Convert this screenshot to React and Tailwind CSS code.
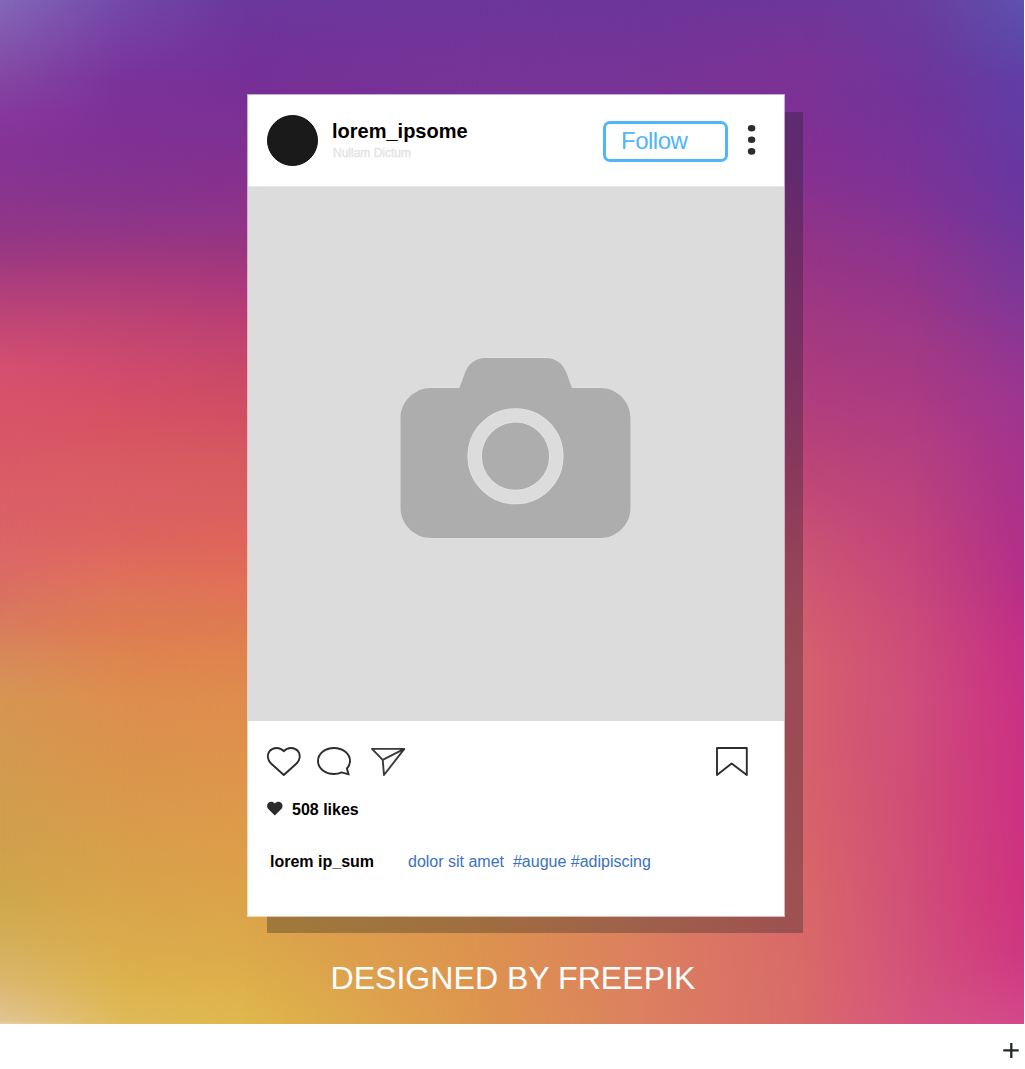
import React from "react";

/* Vertical colour ramps; each one fades in over the previous from left to right. */
const backdropRamps = [
  "bg-[linear-gradient(180deg,#8468b8_0px,#8356ad_45px,#8447a2_80px,#863a9f_110px,#863497_140px,#873494_170px,#8b358b_200px,#913787_230px,#9e3a80_260px,#ab3e7f_280px,#b5417a_300px,#c54874_330px,#d44f72_365px,#d85269_400px,#d95867_450px,#db5e67_500px,#dc6866_560px,#d97361_600px,#d87d5d_630px,#d78b59_660px,#d69653_700px,#d39a50_750px,#d29d4e_800px,#cfa14c_850px,#d0a84c_900px,#d4ae58_940px,#dab76c_980px,#debd7f_1000px,#e2c795_1024px)]",
  "bg-[linear-gradient(180deg,#7249a9_0px,#783ea2_40px,#7a339b_80px,#7d3196_120px,#823292_160px,#87348c_200px,#913688_230px,#a2387e_260px,#b03e7a_290px,#bd4474_320px,#c94870_350px,#d24c6b_380px,#d65263_420px,#d95a62_460px,#da5f63_500px,#dd645f_540px,#df6e5b_570px,#de7757_600px,#de7c52_630px,#de854f_660px,#dd8e4f_700px,#db924c_740px,#d9994c_800px,#d89f4a_850px,#d9a54b_900px,#daab4c_940px,#dcb24d_980px,#e0ba5a_1024px)] [mask-image:linear-gradient(90deg,transparent_0px,black_120px)]",
  "bg-[linear-gradient(180deg,#6b379d_0px,#70339a_40px,#772f96_90px,#7d3194_130px,#87308e_180px,#8f3489_220px,#9a367f_250px,#ad3a7c_290px,#ba3f73_320px,#c3456e_350px,#cb4a66_380px,#d25063_420px,#d65a60_460px,#d95f60_500px,#df6459_540px,#e06f58_580px,#de7a51_620px,#df824f_650px,#df8c4d_700px,#de924c_750px,#de974b_800px,#dd9d49_850px,#dca34a_900px,#dca94a_950px,#dfb84c_1024px)] [mask-image:linear-gradient(90deg,transparent_120px,black_245px)]",
  "bg-[linear-gradient(180deg,#6c369b_0px,#793395_94px,#dd914f_900px,#dd954e_1024px)] [mask-image:linear-gradient(90deg,transparent_245px,black_480px)]",
  "bg-[linear-gradient(180deg,#6c3599_0px,#793395_94px,#dc7e5f_900px,#dc8160_1024px)] [mask-image:linear-gradient(90deg,transparent_480px,black_640px)]",
  "bg-[linear-gradient(180deg,#6d3699_0px,#7a3295_60px,#7e3194_120px,#863191_180px,#923487_240px,#9f3783_300px,#a53a80_340px,#b03e7d_400px,#b94378_450px,#c34a76_500px,#ca5373_550px,#d05a70_600px,#d5606d_660px,#d6606d_750px,#d76569_850px,#d86868_900px,#d96a6a_1024px)] [mask-image:linear-gradient(90deg,transparent_640px,black_805px)]",
  "bg-[linear-gradient(180deg,#6a3d9e_0px,#6e379c_60px,#713399_100px,#783399_150px,#803395_200px,#8c3490_250px,#97368a_300px,#a23985_350px,#ab3b83_400px,#b53f80_450px,#bb427d_500px,#c4457c_560px,#cb4a7a_620px,#cf4d7b_700px,#d04c78_800px,#d14e78_900px,#d3527b_980px,#d65482_1024px)] [mask-image:linear-gradient(90deg,transparent_805px,black_915px)]",
  "bg-[linear-gradient(180deg,#5f50ae_0px,#5d48a8_40px,#613ea5_80px,#633ba3_120px,#6736a0_170px,#6c369e_210px,#753799_250px,#7f3797_300px,#903692_350px,#9d3590_400px,#a5338c_450px,#ac318a_500px,#b13088_550px,#bb2f86_600px,#c53085_650px,#ca3184_700px,#cd3182_800px,#cf337f_900px,#cf3781_950px,#d03e84_980px,#d3498a_1024px)] [mask-image:linear-gradient(90deg,transparent_915px,black_1020px)]",
];

function Backdrop() {
  return (
    <>
      {backdropRamps.map((ramp) => (
        <div key={ramp} className={`col-start-1 row-start-1 ${ramp}`} />
      ))}
      <div className="col-start-1 row-start-1 border-r-2 border-b-2 border-white/15" />
    </>
  );
}

function CameraIcon() {
  return (
    <svg width="232" height="182" viewBox="400 357 232 182">
      <path
        d="M431 388H459.3L464.5 374C468 364 475 358 485.500 358H546C556 358 563.500 364 567 374L572 388H600.500C617 388 630.500 401.500 630.500 418V508C630.500 524.500 617 538 600.500 538H431C414.500 538 400.500 524.500 400.500 508V418C400.500 401.500 414.500 388 431 388Z"
        fill="#adadad"
        stroke="#e4e4e4"
        strokeWidth="0.8"
        paintOrder="stroke"
      />
      <circle cx="515.5" cy="456.2" r="40.8" fill="none" stroke="#e6e6e6" strokeWidth="14.400" />
      <circle cx="515.5" cy="456.2" r="40.8" fill="none" stroke="#dcdcdc" strokeWidth="13" />
    </svg>
  );
}

function Header() {
  return (
    <header className="flex h-[91px] items-start pl-[19px]">
      <div className="mt-5 size-[51px] rounded-full border border-[#101010] bg-[#1a1a1a]" />
      <div className="mt-6 ml-[14px] w-[271px]">
        <div className="text-xl leading-6 font-bold text-black">lorem_ipsome</div>
        <div className="mt-0.5 ml-px text-xs leading-4 text-[#e2e2e2] [-webkit-text-stroke:0.4px_#e6e6e6]">Nullam Dictum</div>
      </div>
      <button className="mt-[26px] flex h-[41px] w-[125px] items-start rounded-[7px] border-3 border-[#51b5f8] pt-0.5 pl-[15px] text-2xl leading-[30px] tracking-[-0.5px] text-[#51b5f8]">
        Follow
      </button>
      <svg width="10" height="32" viewBox="0 0 10 32" className="mt-[29px] ml-[19px]" fill="#2b2b2b">
        <ellipse cx="4.600" cy="4.200" rx="3.700" ry="3.300" />
        <ellipse cx="4.600" cy="15.800" rx="3.700" ry="3.300" />
        <ellipse cx="4.600" cy="27.400" rx="3.700" ry="3.300" />
      </svg>
    </header>
  );
}

function Actions() {
  return (
    <div className="flex h-[30px] items-start pl-[18px]">
      <svg width="36" height="30" viewBox="266 746 36 30" fill="none" stroke="#2d2d2d" strokeWidth="1.900" strokeLinejoin="round">
        <path d="M283.800 775L270.800 763.200C267.400 760 266.900 754.500 269.600 751.200C272.900 747 280 746.800 283.800 751.200C287.600 746.800 294.700 747 298 751.200C300.700 754.500 300.200 760 296.800 763.200Z" />
      </svg>
      <svg width="36" height="30" viewBox="316 746 36 30" className="ml-[14px]" fill="none" stroke="#2d2d2d" strokeWidth="1.900" strokeLinejoin="miter">
        <path d="M341.500 772.400C339.200 773.500 336.700 774 334 774C325 774 318 768.300 318 761C318 753.700 325 748 334 748C343 748 350 753.700 350 761C350 763.900 348.900 766.400 346.900 768.500L348.500 774.200Z" />
      </svg>
      <svg width="37" height="30" viewBox="370 746 37 30" className="ml-[18px]" fill="none" stroke="#3a3a3a" strokeWidth="1.900" strokeLinejoin="round">
        <path d="M372 748.900H404.300L384 775L382.700 759.800Z" />
        <path d="M382.700 759.800L404.300 748.900" />
        <path d="M400 749L404.300 749L401.500 752.500Z" fill="#2d2d2d" stroke="none" />
      </svg>
      <svg width="34" height="30" viewBox="715 746 34 30" className="ml-[308px]" fill="none" stroke="#2d2d2d" strokeWidth="1.900" strokeLinejoin="round">
        <path d="M717 748H746.800V775L731.600 763.500L717 775Z" />
      </svg>
    </div>
  );
}

function PostCard() {
  return (
    <article className="z-10 col-start-1 row-start-1 mt-[94px] ml-[247px] flex h-[823px] w-[538px] flex-col border border-white/60 bg-white bg-clip-padding shadow-[19px_17px_0_-1px_rgba(20,25,30,0.3)]">
      <Header />
      <div className="flex h-[535px] items-start justify-center border-t border-[#e8e8e8] bg-[#dcdcdc] pt-[170px]">
        <CameraIcon />
      </div>
      <div className="flex flex-col pt-[25px]">
        <Actions />
        <div className="mt-[22px] flex h-6 items-start pl-[19px]">
          <svg width="16" height="15" viewBox="0 0 16 15" className="mt-[3px]" fill="#2b2b2b">
            <path d="M7.800 14.400L1.300 8C-0.300 6.300 -0.300 3.600 1.200 2C3 0.300 5.800 0.300 7.800 2.500C9.800 0.300 12.600 0.300 14.400 2C15.900 3.600 15.900 6.300 14.300 8Z" />
          </svg>
          <span className="ml-[9px] leading-6 font-bold text-black">508 likes</span>
        </div>
        <div className="mt-7 flex h-6 items-start pl-[22px]">
          <span className="w-[138px] leading-6 font-bold text-black">lorem ip_sum</span>
          <span className="leading-6 whitespace-pre text-[#3b72bc]">{"dolor sit amet  #augue #adipiscing"}</span>
        </div>
      </div>
    </article>
  );
}

export default function App() {
  return (
    <main className="flex h-[1069px] w-[1025px] flex-col overflow-hidden bg-white font-['Liberation_Sans',sans-serif]">
      <section className="grid h-[1024px] w-[1024px] grid-cols-[1024px] grid-rows-[1024px]">
        <Backdrop />
        <PostCard />
        <p className="z-10 col-start-1 row-start-1 mt-[958px] ml-[330.5px] h-10 text-[32.1px] leading-10 whitespace-nowrap text-white">
          DESIGNED BY FREEPIK
        </p>
      </section>
      <footer className="flex justify-end pt-[18px] pr-[5px]">
        <svg width="18" height="18" viewBox="0 0 18 18" stroke="#23272f" strokeWidth="2.300">
          <path d="M1.300 8.300H16.700M9.300 1V16" />
        </svg>
      </footer>
    </main>
  );
}
